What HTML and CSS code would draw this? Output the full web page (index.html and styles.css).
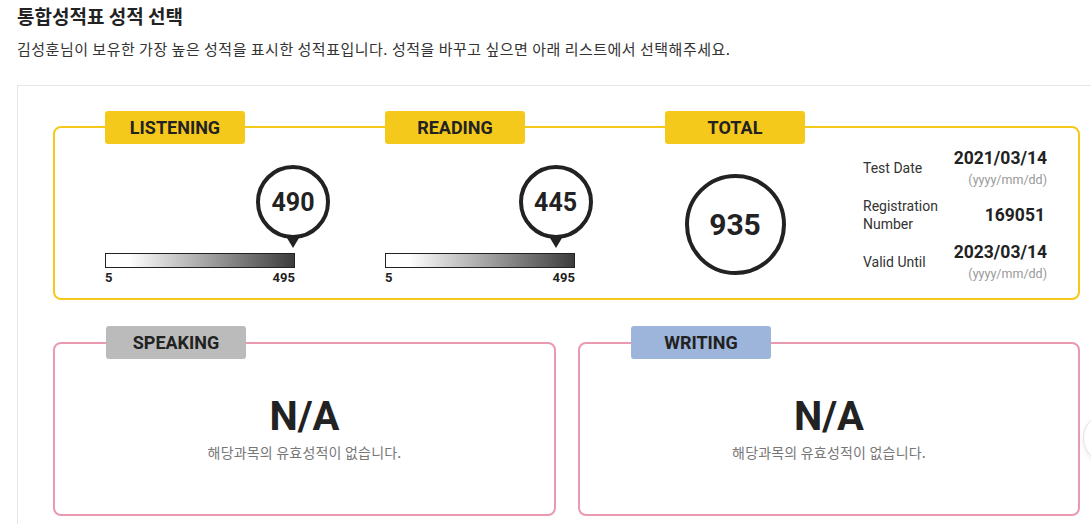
FILE: index.html
```html
<!DOCTYPE html>
<html>
  <head>
    <title>통합성적표 성적 선택</title>
    <link rel="stylesheet" href="styles.css">
  </head>
  <body>
    <div class="page">
      <h1 class="page-title">통합성적표 성적 선택</h1>
      <p class="page-desc">김성훈님이 보유한 가장 높은 성적을 표시한 성적표입니다. 성적을 바꾸고 싶으면 아래 리스트에서 선택해주세요.</p>

      <div class="score-container">
        <div class="score-main">
          <div class="section">
            <div class="tab tab-yellow">LISTENING</div>
            <div class="marker-track">
              <div class="marker" style="margin-left: 98.98%;">
                <div class="marker-circle">490</div>
                <div class="marker-arrow"></div>
              </div>
            </div>
            <div class="bar"></div>
            <div class="bar-labels">
              <span>5</span>
              <span>495</span>
            </div>
          </div>

          <div class="section">
            <div class="tab tab-yellow">READING</div>
            <div class="marker-track">
              <div class="marker" style="margin-left: 89.8%;">
                <div class="marker-circle">445</div>
                <div class="marker-arrow"></div>
              </div>
            </div>
            <div class="bar"></div>
            <div class="bar-labels">
              <span>5</span>
              <span>495</span>
            </div>
          </div>

          <div class="section section-total">
            <div class="tab tab-yellow">TOTAL</div>
            <div class="total-circle">935</div>
          </div>

          <div class="info">
            <div class="info-label">Test Date</div>
            <div class="info-value">
              <strong>2021/03/14</strong>
              <span>(yyyy/mm/dd)</span>
            </div>
            <div class="info-label">Registration<br>Number</div>
            <div class="info-value">
              <strong class="reg-no">169051</strong>
            </div>
            <div class="info-label">Valid Until</div>
            <div class="info-value">
              <strong>2023/03/14</strong>
              <span>(yyyy/mm/dd)</span>
            </div>
          </div>
        </div>

        <div class="score-sub">
          <div class="sub-box">
            <div class="tab tab-gray">SPEAKING</div>
            <div class="na">N/A</div>
            <div class="na-desc">해당과목의 유효성적이 없습니다.</div>
          </div>
          <div class="sub-box">
            <div class="tab tab-blue">WRITING</div>
            <div class="na">N/A</div>
            <div class="na-desc">해당과목의 유효성적이 없습니다.</div>
          </div>
        </div>

        <button class="next-btn" type="button"></button>
      </div>
    </div>
  </body>
</html>
```

FILE: styles.css
```css
body {
  font-family: Roboto, "Noto Sans CJK KR", sans-serif;
  margin: 0;
  padding: 0;
  color: #222;
  background-color: #fff;
  overflow: hidden;
}

.page {
  padding: 4px 0 0 17px;
}

.page-title {
  margin: 0;
  font-family: "Noto Sans CJK KR", sans-serif;
  font-size: 19px;
  line-height: 24px;
  font-weight: bold;
  color: #222;
}

.page-desc {
  margin: 10px 0 0;
  font-family: "Noto Sans CJK KR", sans-serif;
  font-size: 15px;
  line-height: 22px;
  letter-spacing: 0.5px;
  color: #333;
}

.score-container {
  position: relative;
  width: 1099px;
  box-sizing: border-box;
  margin-top: 25px;
  padding: 40px 35px 30px;
  border: 1px solid #e6e6e6;
}

/* yellow box */
.score-main {
  display: flex;
  align-items: flex-start;
  height: 174px;
  box-sizing: border-box;
  padding-left: 50px;
  border: 2px solid #f5c91c;
  border-radius: 8px;
}

.tab {
  width: 140px;
  height: 33px;
  line-height: 33px;
  text-align: center;
  font-size: 18px;
  font-weight: bold;
  color: #222;
  border-radius: 3px;
}

.tab-yellow {
  background-color: #f5c91c;
}

.tab-gray {
  background-color: #bbbbbb;
}

.tab-blue {
  background-color: #9db5da;
}

.section {
  width: 280px;
  display: flex;
  flex-direction: column;
}

.section .tab {
  margin-top: -17px;
}

.marker-track {
  width: 190px;
  margin-top: 21px;
}

.marker {
  width: 74px;
  display: flex;
  flex-direction: column;
  align-items: center;
  transform: translateX(-50%);
}

.marker-circle {
  width: 74px;
  height: 74px;
  box-sizing: border-box;
  border: 4px solid #222;
  border-radius: 50%;
  display: flex;
  align-items: center;
  justify-content: center;
  font-size: 25px;
  font-weight: bold;
  color: #222;
  background-color: #fff;
}

.marker-arrow {
  width: 0;
  height: 0;
  border-left: 6px solid transparent;
  border-right: 6px solid transparent;
  border-top: 10px solid #222;
  margin-top: -1px;
}

.bar {
  width: 190px;
  height: 15px;
  box-sizing: border-box;
  margin-top: 5px;
  border: 1px solid #222;
  background: linear-gradient(to right, #fff 12%, #3c3c3c 100%);
}

.bar-labels {
  width: 190px;
  display: flex;
  justify-content: space-between;
  margin-top: 3px;
  font-size: 13px;
  line-height: 14px;
  font-weight: bold;
  color: #222;
}

.section-total {
  width: 140px;
  align-items: center;
}

.total-circle {
  width: 101px;
  height: 101px;
  box-sizing: border-box;
  margin-top: 30px;
  border: 4px solid #222;
  border-radius: 50%;
  display: flex;
  align-items: center;
  justify-content: center;
  font-size: 30px;
  font-weight: bold;
  color: #222;
}

.info {
  width: 184px;
  margin: 20px 0 0 58px;
  display: grid;
  grid-template-columns: auto 1fr;
  align-items: center;
  row-gap: 9px;
}

.info-label {
  font-size: 14px;
  line-height: 18px;
  color: #333;
}

.info-value {
  display: flex;
  flex-direction: column;
  align-items: flex-end;
}

.info-value strong {
  font-size: 17.5px;
  line-height: 20px;
  font-weight: bold;
  color: #222;
}

.info-value .reg-no {
  padding-right: 2px;
}

.info-value span {
  margin-top: 4px;
  font-size: 12.5px;
  line-height: 16px;
  color: #999;
}

/* speaking / writing */
.score-sub {
  display: grid;
  grid-template-columns: 503px 502px;
  column-gap: 22px;
  margin-top: 42px;
}

.sub-box {
  height: 174px;
  box-sizing: border-box;
  border: 2px solid #e99aae;
  border-radius: 8px;
  display: flex;
  flex-direction: column;
  align-items: center;
}

.sub-box .tab {
  align-self: flex-start;
  margin: -18px 0 0 51px;
}

.na {
  margin-top: 36px;
  font-size: 40px;
  line-height: 44px;
  font-weight: bold;
  color: #222;
}

.na-desc {
  margin-top: 3px;
  font-family: "Noto Sans CJK KR", sans-serif;
  font-size: 14px;
  line-height: 20px;
  letter-spacing: 0.2px;
  color: #777;
}

.next-btn {
  position: absolute;
  left: 1065px;
  top: 327px;
  width: 50px;
  height: 50px;
  padding: 0;
  border: 1px solid #e4e4e4;
  border-radius: 50%;
  background-color: #fff;
  box-shadow: 0 2px 5px rgba(0, 0, 0, 0.08);
}
```
